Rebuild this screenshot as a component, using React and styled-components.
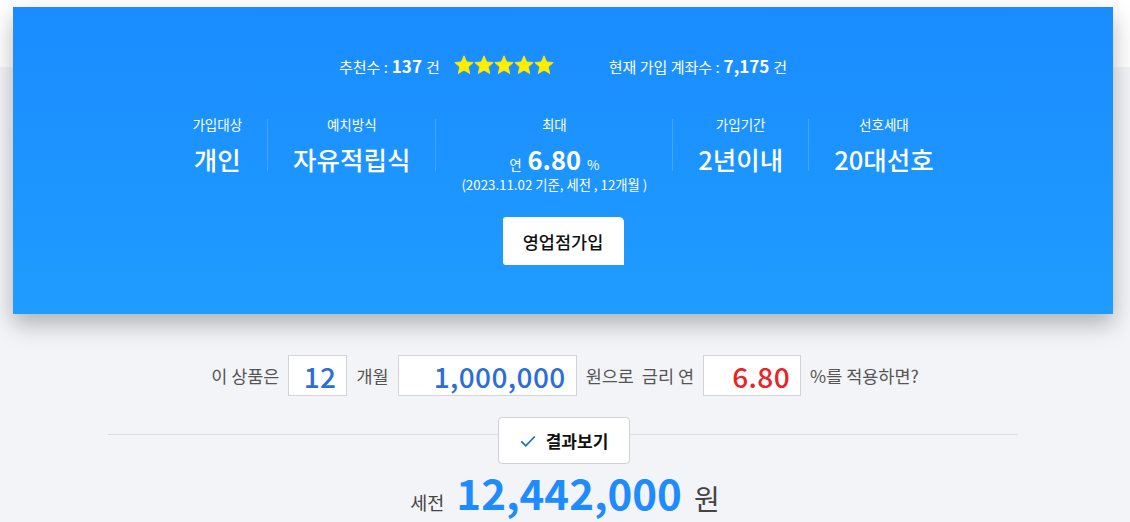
import React from "react";
import styled, { createGlobalStyle } from "styled-components";

const GlobalStyle = createGlobalStyle`
  * { box-sizing: border-box; }
  body {
    margin: 0;
    font-family: "Noto Sans CJK KR", "Noto Sans", sans-serif;
    background: #f3f4f8;
  }
`;

const Page = styled.div`
  min-height: 522px;
  background: linear-gradient(180deg, #fff 0, #fff 67px, #f3f4f8 67px);
  padding-top: 7px;
  overflow: hidden;
`;

const Panel = styled.section`
  width: 1100px;
  margin-left: 13px;
  height: 307px;
  background: linear-gradient(180deg, #1a8cff 0%, #1f9cff 100%);
  box-shadow: 0 10px 22px rgba(0, 0, 0, 0.28);
  color: #fff;
  display: flex;
  flex-direction: column;
  align-items: center;
  padding-top: 45px;
`;

const StatRow = styled.div`
  display: flex;
  align-items: center;
  height: 26px;
  font-size: 15px;
`;

const Stat = styled.div`
  display: flex;
  align-items: baseline;
  gap: 4px;
  margin-right: ${(p) => p.$gap || 0}px;
  b { font-size: 17px; font-weight: 700; }
`;

const Stars = styled.div`
  display: flex;
  margin-right: 55px;
`;

const InfoRow = styled.div`
  display: flex;
  margin-top: 41px;
`;

const InfoCol = styled.div`
  display: flex;
  flex-direction: column;
  align-items: center;
  padding: 0 25px;
  height: 52px;
  & + & { border-left: 1px solid rgba(255, 255, 255, 0.18); }
`;

const Label = styled.div`
  font-size: 13.5px;
  line-height: 18px;
  margin-top: -4px;
`;

const Value = styled.div`
  font-size: 25.5px;
  font-weight: 500;
  line-height: 34px;
  margin-top: 9px;
  white-space: nowrap;
  display: flex;
  align-items: baseline;
  gap: 6px;
  small { font-size: 13.5px; font-weight: 400; }
  strong { font-size: 25.5px; font-weight: 700; }
`;

const Note = styled.div`
  font-size: 13.3px;
  line-height: 16px;
  white-space: nowrap;
  margin-top: -4px;
`;

const JoinButton = styled.button`
  margin-top: 46px;
  width: 121px;
  height: 48px;
  border: 0;
  border-radius: 3px 5px 0 3px;
  background: #fff;
  color: #111;
  font-family: inherit;
  font-size: 17.5px;
  font-weight: 500;
`;

const CalcRow = styled.div`
  display: flex;
  align-items: center;
  justify-content: center;
  margin-top: 41px;
  font-size: 17.5px;
  color: #555;
  gap: 9px;
`;

const Box = styled.div`
  width: ${(p) => p.$w}px;
  height: 41px;
  background: #fff;
  border: 1px solid #d2d4d8;
  display: flex;
  align-items: center;
  justify-content: flex-end;
  padding-right: 10px;
  font-size: 28px;
  letter-spacing: 0.4px;
  font-weight: 500;
  color: ${(p) => p.$color || "#2b6fd6"};
`;

const ResultBar = styled.div`
  position: relative;
  width: 910px;
  margin: 21px auto 0 108px;
  height: 47px;
  display: flex;
  justify-content: center;
  &::before {
    content: "";
    position: absolute;
    left: 0;
    right: 0;
    top: 17px;
    border-top: 1px solid #dcdde1;
  }
`;

const ResultButton = styled.button`
  position: relative;
  width: 132px;
  height: 47px;
  margin-left: 1px;
  background: #fff;
  border: 1px solid #cfd1d6;
  border-radius: 4px;
  display: flex;
  align-items: center;
  justify-content: center;
  gap: 9px;
  font-family: inherit;
  font-size: 17px;
  font-weight: 700;
  color: #111;
`;

const Result = styled.div`
  display: flex;
  align-items: baseline;
  justify-content: center;
  margin-top: 2px;
  gap: 12px;
  color: #444;
  font-size: 18.5px;
`;

const Amount = styled.span`
  font-size: 42px;
  font-weight: 700;
  color: #1e8cff;
  line-height: 52px;
`;

const Won = styled.span`
  font-size: 28px;
`;

const Star = () => (
  <svg width="20" height="20" viewBox="0 0 24 24">
    <polygon
      points="12,1 15.2,8.3 23,9 17.1,14.3 18.9,22.3 12,18.2 5.1,22.3 6.9,14.3 1,9 8.8,8.3"
      fill="#ffee00"
      stroke="#ffee00"
      strokeWidth="1"
      strokeLinejoin="round"
    />
  </svg>
);

const info = [
  { label: "가입대상", value: "개인" },
  { label: "예치방식", value: "자유적립식" },
  { label: "최대", rate: true },
  { label: "가입기간", value: "2년이내" },
  { label: "선호세대", value: "20대선호" },
];

export default function App() {
  return (
    <Page>
      <GlobalStyle />
      <Panel>
        <StatRow>
          <Stat $gap={14}>
            추천수 : <b>137</b> 건
          </Stat>
          <Stars>
            {[0, 1, 2, 3, 4].map((i) => (
              <Star key={i} />
            ))}
          </Stars>
          <Stat>
            현재 가입 계좌수 : <b>7,175</b> 건
          </Stat>
        </StatRow>
        <InfoRow>
          {info.map((c) => (
            <InfoCol key={c.label}>
              <Label>{c.label}</Label>
              {c.rate ? (
                <>
                  <Value>
                    <small>연</small>
                    <strong>6.80</strong>
                    <small>%</small>
                  </Value>
                  <Note>(2023.11.02 기준, 세전 , 12개월 )</Note>
                </>
              ) : (
                <Value>{c.value}</Value>
              )}
            </InfoCol>
          ))}
        </InfoRow>
        <JoinButton>영업점가입</JoinButton>
      </Panel>

      <CalcRow>
        이 상품은
        <Box $w={59}>12</Box>
        개월
        <Box $w={179}>1,000,000</Box>
        원으로 &nbsp;금리 연
        <Box $w={98} $color="#e8232a">6.80</Box>
        %를 적용하면?
      </CalcRow>

      <ResultBar>
        <ResultButton>
          <svg width="18" height="18" viewBox="0 0 24 24" fill="none" stroke="#1a6fc9" strokeWidth="2.3">
            <polyline points="3,12.5 9,18.5 21,6" />
          </svg>
          결과보기
        </ResultButton>
      </ResultBar>

      <Result>
        세전
        <Amount>12,442,000</Amount>
        <Won>원</Won>
      </Result>
    </Page>
  );
}
